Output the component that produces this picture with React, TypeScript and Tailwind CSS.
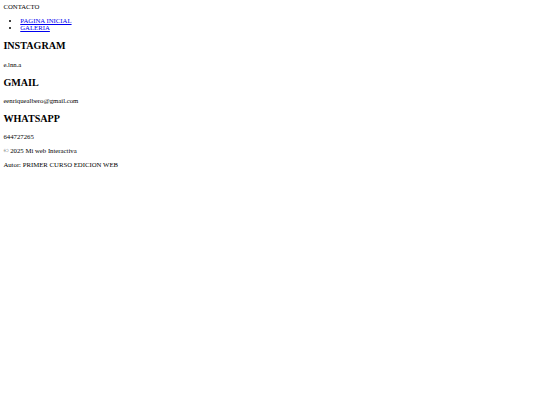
import React from "react";

// Plain unstyled document, rendered at 1280px and scaled down to 540px (0.421875).
const links = ["PAGINA INICIAL", "GALERIA"];

const contacts = [
  { title: "INSTAGRAM", value: "e.lnn.a" },
  { title: "GMAIL", value: "eenriquealbero@gmail.com" },
  { title: "WHATSAPP", value: "644727265" },
];

export default function App() {
  return (
    <div className="min-h-[405px] bg-white p-[3.375px] font-['Liberation_Serif',serif] text-[6.75px] leading-[normal] text-black">
      <header>
        <div>CONTACTO</div>
        <nav>
          <ul className="my-[6.75px] list-disc pl-[16.875px]">
            {links.map((l) => (
              <li key={l}>
                <a href="#" className="text-[#0000ee] underline">
                  {l}
                </a>
              </li>
            ))}
          </ul>
        </nav>
      </header>
      <main>
        {contacts.map((c) => (
          <section key={c.title}>
            <h2 className="my-[9.2px] text-[10.125px] font-bold leading-[normal]">{c.title}</h2>
            <p className="my-[6.75px]">{c.value}</p>
          </section>
        ))}
      </main>
      <footer>
        <p className="my-[6.75px]">© 2025 Mi web Interactiva</p>
        <p className="my-[6.75px]">Autor: PRIMER CURSO EDICION WEB</p>
      </footer>
    </div>
  );
}
